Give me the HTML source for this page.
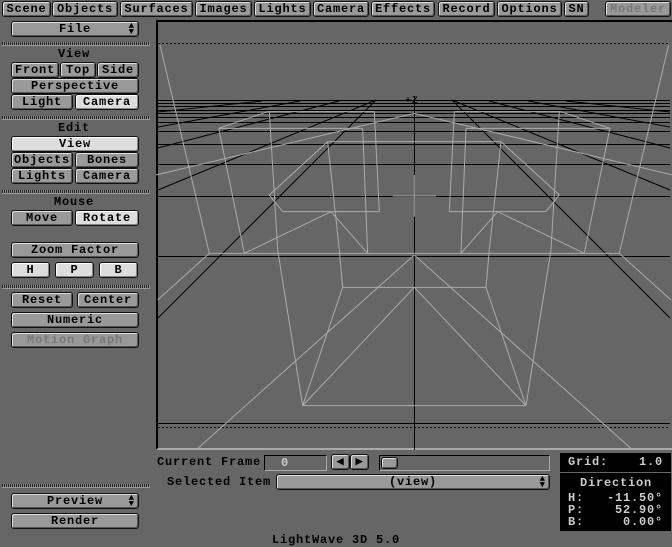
<!DOCTYPE html>
<html><head><meta charset="utf-8"><style>
*{margin:0;padding:0;box-sizing:border-box}
body{width:672px;height:544px;background:#666;position:relative;overflow:hidden;font-family:"Liberation Mono",monospace;font-weight:bold;font-size:12px;letter-spacing:0.8px;color:#000}
.b{position:absolute;background:#999;border:1px solid #111;border-radius:3px;box-shadow:inset 1px 1px 0 #ddd,inset -1px -1px 0 #555;display:flex;align-items:center;justify-content:center;height:16px;line-height:14px;white-space:nowrap}
.s{background:#ddd;box-shadow:inset 1px 1px 0 #fff,inset -1px -1px 0 #888}
.d{color:#777}
.t{position:absolute;white-space:nowrap;line-height:14px}
.sep{position:absolute;left:2px;width:148px;height:4px;background:repeating-linear-gradient(90deg,#222 0 1px,#888 1px 2px);border-bottom:1px solid #999}
.ar{position:absolute;right:4px;top:1px;font-size:9px;line-height:6px;letter-spacing:0}
.blk{position:absolute;background:#000;color:#ccc}
</style></head><body>
<!-- tabs -->
<div class="b" style="left:2px;top:1px;width:49px">Scene</div>
<div class="b" style="left:52px;top:1px;width:66px">Objects</div>
<div class="b" style="left:120px;top:1px;width:73px">Surfaces</div>
<div class="b" style="left:195px;top:1px;width:57px">Images</div>
<div class="b" style="left:254px;top:1px;width:57px">Lights</div>
<div class="b" style="left:313px;top:1px;width:56px">Camera</div>
<div class="b" style="left:371px;top:1px;width:64px">Effects</div>
<div class="b" style="left:438px;top:1px;width:57px">Record</div>
<div class="b" style="left:497px;top:1px;width:65px">Options</div>
<div class="b" style="left:564px;top:1px;width:25px">SN</div>
<div class="b d" style="left:605px;top:1px;width:66px">Modeler</div>

<!-- left panel -->
<div class="b" style="left:11px;top:21px;width:128px">File<span class="ar">▲<br>▼</span></div>
<div class="sep" style="top:42px"></div>
<div class="t" style="left:58px;top:47px">View</div>
<div class="b" style="left:11px;top:62px;width:48px">Front</div>
<div class="b" style="left:60px;top:62px;width:36px">Top</div>
<div class="b" style="left:97px;top:62px;width:42px">Side</div>
<div class="b" style="left:11px;top:78px;width:128px">Perspective</div>
<div class="b" style="left:11px;top:94px;width:62px">Light</div>
<div class="b s" style="left:75px;top:94px;width:64px">Camera</div>
<div class="sep" style="top:116px"></div>
<div class="t" style="left:58px;top:121px">Edit</div>
<div class="b s" style="left:11px;top:136px;width:128px">View</div>
<div class="b" style="left:11px;top:152px;width:62px">Objects</div>
<div class="b" style="left:75px;top:152px;width:64px">Bones</div>
<div class="b" style="left:11px;top:168px;width:62px">Lights</div>
<div class="b" style="left:75px;top:168px;width:64px">Camera</div>
<div class="sep" style="top:190px"></div>
<div class="t" style="left:54px;top:195px">Mouse</div>
<div class="b" style="left:11px;top:210px;width:62px">Move</div>
<div class="b s" style="left:75px;top:210px;width:64px">Rotate</div>
<div class="b" style="left:11px;top:242px;width:128px">Zoom Factor</div>
<div class="b s" style="left:11px;top:262px;width:39px">H</div>
<div class="b s" style="left:55px;top:262px;width:39px">P</div>
<div class="b s" style="left:99px;top:262px;width:39px">B</div>
<div class="sep" style="top:285px"></div>
<div class="b" style="left:11px;top:292px;width:62px">Reset</div>
<div class="b" style="left:77px;top:292px;width:62px">Center</div>
<div class="b" style="left:11px;top:312px;width:128px">Numeric</div>
<div class="b d" style="left:11px;top:332px;width:128px">Motion Graph</div>
<div class="sep" style="top:484px"></div>
<div class="b" style="left:11px;top:493px;width:128px">Preview<span class="ar">▲<br>▼</span></div>
<div class="b" style="left:11px;top:513px;width:128px">Render</div>

<!-- viewport -->
<div style="position:absolute;left:156px;top:20px;width:516px;height:430px;border-left:2px solid #000;border-top:2px solid #000;border-bottom:2px solid #aaa;background:#666"></div>
<svg style="position:absolute;left:0;top:0" width="672" height="544">
<g stroke="#000" stroke-width="1" shape-rendering="crispEdges">
<line x1="158" y1="43.5" x2="670" y2="43.5" stroke-dasharray="2 2"/>
<line x1="158" y1="427.5" x2="670" y2="427.5" stroke-dasharray="2 2"/>
<line x1="158" y1="423.5" x2="670" y2="423.5"/>
<line x1="158" y1="100.5" x2="670" y2="100.5"/>
<line x1="158" y1="103.5" x2="670" y2="103.5"/>
<line x1="158" y1="106.5" x2="670" y2="106.5"/>
<line x1="158" y1="110.5" x2="670" y2="110.5"/>
<line x1="158" y1="113.5" x2="670" y2="113.5"/>
<line x1="158" y1="117.5" x2="670" y2="117.5"/>
<line x1="158" y1="122.5" x2="670" y2="122.5"/>
<line x1="158" y1="131.5" x2="670" y2="131.5"/>
<line x1="158" y1="144.5" x2="670" y2="144.5"/>
<line x1="158" y1="164.5" x2="670" y2="164.5"/>
<line x1="158" y1="196.5" x2="670" y2="196.5"/>
<line x1="158" y1="256.5" x2="670" y2="256.5"/>
<line x1="414.5" y1="96" x2="414.5" y2="450"/>
</g>
<g stroke="#000" stroke-width="1">
<line x1="158" y1="318" x2="376" y2="100"/><line x1="670" y1="318" x2="452" y2="100"/>
<line x1="158" y1="190" x2="376" y2="100"/><line x1="670" y1="190" x2="452" y2="100"/>
<line x1="158" y1="148" x2="339" y2="101"/><line x1="670" y1="148" x2="489" y2="101"/>
<line x1="158" y1="127" x2="300" y2="101"/><line x1="670" y1="127" x2="528" y2="101"/>
<line x1="158" y1="112" x2="262" y2="101"/><line x1="670" y1="112" x2="566" y2="101"/>
</g>
<text x="405" y="103" font-family="Liberation Mono" font-size="10" fill="#000" font-weight="normal">+Z</text>
<g transform="translate(156,80) scale(0.3333)" stroke="#aaa" stroke-width="3" fill="none">
<g id="h">
<polyline points="12,-105 160,520 775,520"/>
<polyline points="335,95 655,95"/>
<polyline points="188,145 620,145"/>
<polyline points="335,95 188,145 265,520"/>
<polyline points="655,95 670,395"/>
<polyline points="620,145 635,520"/>
<polyline points="340,95 365,510 440,977"/>
<polyline points="515,185 775,185"/>
<polyline points="515,185 340,345 380,395 670,395"/>
<polyline points="525,395 265,520"/>
<polyline points="525,395 635,520"/>
<polyline points="515,185 550,510 560,622 775,622"/>
<polyline points="560,622 440,977 775,977"/>
<polyline points="775,622 440,977"/>
<polyline points="775,525 120,1110"/>
<polyline points="160,520 5,660"/>
<polyline points="0,285 775,100"/>
<polyline points="710,348 775,348"/>
</g>
<use href="#h" transform="translate(1550,0) scale(-1,1)"/>
<line x1="775" y1="285" x2="775" y2="410"/>
</g>
</svg>

<!-- bottom controls -->
<div class="t" style="left:157px;top:455px">Current Frame</div>
<div style="position:absolute;left:264px;top:455px;width:63px;height:16px;background:#666;border:1px solid #000;border-right-color:#aaa;border-bottom-color:#aaa"><span class="t" style="left:16px;top:0;color:#ccc">0</span></div>
<div class="b" style="left:331px;top:454px;width:19px;font-size:9px">◀</div>
<div class="b" style="left:350px;top:454px;width:19px;font-size:9px">▶</div>
<div style="position:absolute;left:379px;top:455px;width:171px;height:16px;background:#666;border:1px solid #000;border-right-color:#aaa;border-bottom-color:#aaa"></div>
<div class="b" style="left:381px;top:457px;width:17px;height:12px"></div>
<div class="blk" style="left:560px;top:453px;width:111px;height:19px"><span class="t" style="left:8px;top:2px">Grid:</span><span class="t" style="right:8px;top:2px">1.0</span></div>
<div class="t" style="left:167px;top:475px">Selected Item</div>
<div class="b" style="left:276px;top:474px;width:274px">(view)<span class="ar">▲<br>▼</span></div>
<div class="blk" style="left:560px;top:473px;width:111px;height:58px">
<span class="t" style="left:20px;top:3px">Direction</span>
<span class="t" style="left:8px;top:18px">H:</span><span class="t" style="right:8px;top:18px">-11.50°</span>
<span class="t" style="left:8px;top:30px">P:</span><span class="t" style="right:8px;top:30px">52.90°</span>
<span class="t" style="left:8px;top:42px">B:</span><span class="t" style="right:8px;top:42px">0.00°</span>
</div>
<div class="t" style="left:272px;top:533px">LightWave 3D 5.0</div>
</body></html>
